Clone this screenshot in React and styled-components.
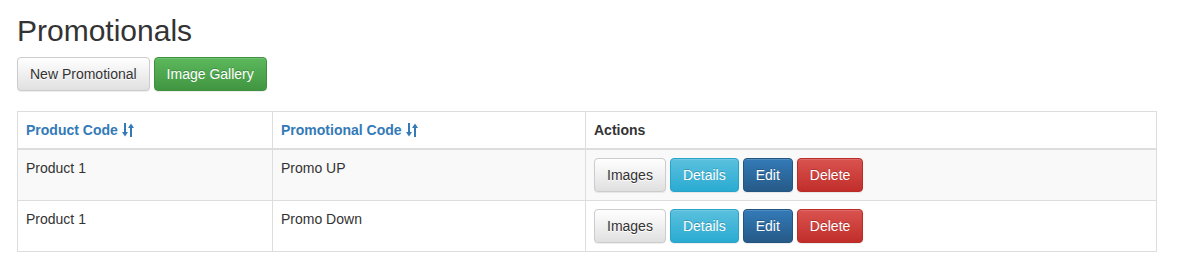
import React from "react";
import styled, { createGlobalStyle, css } from "styled-components";

const GlobalStyle = createGlobalStyle`
  * { box-sizing: border-box; }
  body {
    margin: 0;
    background: #fff;
    color: #333;
    font-family: "Liberation Sans", Arial, sans-serif;
    font-size: 14px;
    line-height: 1.42857143;
  }
`;

const variants = {
  default: css`
    color: #333;
    background-image: linear-gradient(to bottom, #fff 0, #e0e0e0 100%);
    border-color: #ccc;
    text-shadow: 0 1px 0 #fff;
  `,
  success: css`
    color: #fff;
    background-image: linear-gradient(to bottom, #5cb85c 0, #419641 100%);
    border-color: #3e8f3e;
    text-shadow: 0 -1px 0 rgba(0, 0, 0, 0.2);
  `,
  info: css`
    color: #fff;
    background-image: linear-gradient(to bottom, #5bc0de 0, #2aabd2 100%);
    border-color: #28a4c9;
    text-shadow: 0 -1px 0 rgba(0, 0, 0, 0.2);
  `,
  primary: css`
    color: #fff;
    background-image: linear-gradient(to bottom, #337ab7 0, #265a88 100%);
    border-color: #245580;
    text-shadow: 0 -1px 0 rgba(0, 0, 0, 0.2);
  `,
  danger: css`
    color: #fff;
    background-image: linear-gradient(to bottom, #d9534f 0, #c12e2a 100%);
    border-color: #b92c28;
    text-shadow: 0 -1px 0 rgba(0, 0, 0, 0.2);
  `,
};

const Page = styled.div`
  padding: 14px 20px 20px 17px;
`;

const Title = styled.h2`
  margin: 0 0 10px;
  font-size: 30px;
  font-weight: 500;
  line-height: 1.1;
  color: #333;
`;

const Toolbar = styled.div`
  display: flex;
  gap: 4px;
  margin-bottom: 20px;
`;

const Button = styled.button`
  display: inline-block;
  height: 34px;
  padding: 6px 12px;
  border: 1px solid transparent;
  border-radius: 4px;
  font-family: inherit;
  font-size: 14px;
  line-height: 20px;
  white-space: nowrap;
  cursor: pointer;
  box-shadow: inset 0 1px 0 rgba(255, 255, 255, 0.15),
    0 1px 1px rgba(0, 0, 0, 0.075);
  ${(p) => variants[p.$variant || "default"]}
`;

const Table = styled.table`
  width: 1140px;
  border-collapse: collapse;
  border-spacing: 0;
  border: 1px solid #ddd;
`;

const Th = styled.th`
  width: ${(p) => p.$width}px;
  padding: 8px;
  border: 1px solid #ddd;
  border-bottom: 2px solid #ddd;
  text-align: left;
  vertical-align: bottom;
  font-weight: bold;
  line-height: 20px;
  color: #333;
`;

const SortLink = styled.a`
  color: #337ab7;
  text-decoration: none;
  display: inline-flex;
  align-items: center;
  gap: 4px;
`;

const Row = styled.tr`
  background: ${(p) => (p.$striped ? "#f9f9f9" : "#fff")};
`;

const Td = styled.td`
  padding: 8px;
  border: 1px solid #ddd;
  vertical-align: top;
  line-height: 20px;
`;

const Actions = styled.div`
  display: flex;
  gap: 4px;
`;

function SortIcon() {
  return (
    <svg width="12" height="14" viewBox="0 0 12 14" fill="#337ab7">
      <rect x="2" y="0" width="2" height="10" />
      <path d="M0 9 H6 L3 13.5 Z" />
      <rect x="8" y="4" width="2" height="10" />
      <path d="M6 5 H12 L9 0.5 Z" />
    </svg>
  );
}

const rows = [
  { product: "Product 1", promo: "Promo UP" },
  { product: "Product 1", promo: "Promo Down" },
];

export default function App() {
  return (
    <>
      <GlobalStyle />
      <Page>
        <Title>Promotionals</Title>
        <Toolbar>
          <Button>New Promotional</Button>
          <Button $variant="success">Image Gallery</Button>
        </Toolbar>
        <Table>
          <thead>
            <tr>
              <Th $width={255}>
                <SortLink href="#">
                  Product Code <SortIcon />
                </SortLink>
              </Th>
              <Th $width={313}>
                <SortLink href="#">
                  Promotional Code <SortIcon />
                </SortLink>
              </Th>
              <Th>Actions</Th>
            </tr>
          </thead>
          <tbody>
            {rows.map((r, i) => (
              <Row key={i} $striped={i % 2 === 0}>
                <Td>{r.product}</Td>
                <Td>{r.promo}</Td>
                <Td>
                  <Actions>
                    <Button>Images</Button>
                    <Button $variant="info">Details</Button>
                    <Button $variant="primary">Edit</Button>
                    <Button $variant="danger">Delete</Button>
                  </Actions>
                </Td>
              </Row>
            ))}
          </tbody>
        </Table>
      </Page>
    </>
  );
}
